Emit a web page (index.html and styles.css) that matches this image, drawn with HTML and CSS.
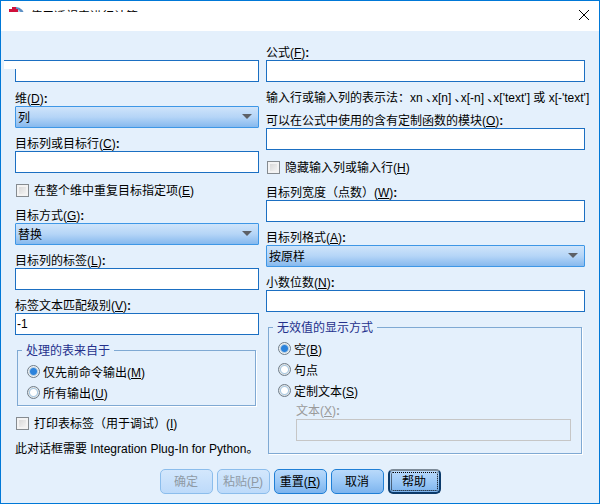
FILE: index.html
```html
<!DOCTYPE html>
<html lang="zh-CN">
<head>
  <meta charset="UTF-8">
  <meta name="viewport" content="width=device-width, initial-scale=1.0">
  <title>使用透视表进行计算</title>
  <link rel="stylesheet" href="styles.css">
</head>
<body>
  <form class="dialog">
    <header class="titlebar">
      <div class="caption">
        <svg class="logo" width="16" height="16" viewBox="0 0 16 16">
          <path d="M7 0a8 8 0 0 1 8 9H7z" fill="#5c8fc4"/>
          <path d="M8 2a6 6 0 0 1 4 6H8z" fill="#b9d3ea"/>
          <path d="M3 0h4v2h2v3H7v4H3V5H0V2h3z" fill="#d0103a"/>
        </svg>
        <span>使用透视表进行计算</span>
      </div>
      <button type="button" class="close" aria-label="关闭">
        <svg width="12" height="12" viewBox="0 0 12 12">
          <path d="M1 1l10 10M11 1L1 11" stroke="#000" stroke-width="1" fill="none"/>
        </svg>
      </button>
    </header>

    <main class="columns">
      <div class="column">
        <div class="field first">
          <input type="text" class="text" aria-label="名称">
        </div>
        <div class="field">
          <label for="dim">维(<u>D</u>)<b>:</b></label>
          <div class="dropdown"><select id="dim"><option>列</option></select></div>
        </div>
        <div class="field">
          <label for="target">目标列或目标行(<u>C</u>)<b>:</b></label>
          <input type="text" class="text" id="target">
        </div>
        <div class="check">
          <input type="checkbox" id="repeat">
          <label for="repeat">在整个维中重复目标指定项(<u>E</u>)</label>
        </div>
        <div class="field">
          <label for="mode">目标方式(<u>G</u>)<b>:</b></label>
          <div class="dropdown"><select id="mode"><option>替换</option></select></div>
        </div>
        <div class="field">
          <label for="collabel">目标列的标签(<u>L</u>)<b>:</b></label>
          <input type="text" class="text" id="collabel">
        </div>
        <div class="field">
          <label for="level">标签文本匹配级别(<u>V</u>)<b>:</b></label>
          <input type="text" class="text" id="level" value="-1">
        </div>
        <fieldset class="group">
          <legend>处理的表来自于</legend>
          <div class="radio">
            <input type="radio" name="source" id="prev" checked>
            <label for="prev">仅先前命令输出(<u>M</u>)</label>
          </div>
          <div class="radio">
            <input type="radio" name="source" id="all">
            <label for="all">所有输出(<u>U</u>)</label>
          </div>
        </fieldset>
        <div class="check">
          <input type="checkbox" id="print">
          <label for="print">打印表标签（用于调试）(<u>I</u>)</label>
        </div>
        <p class="note">此对话框需要 Integration Plug-In for Python。</p>
      </div>

      <div class="column">
        <div class="field">
          <label for="formula">公式(<u>F</u>)<b>:</b></label>
          <input type="text" class="text" id="formula">
        </div>
        <p class="note">输入行或输入列的表示法：<span class="syntax">xn 、x[n] 、x[-n] 、x['text'] 或 x[-'text']</span></p>
        <div class="field">
          <label for="module">可以在公式中使用的含有定制函数的模块(<u>O</u>)<b>:</b></label>
          <input type="text" class="text" id="module">
        </div>
        <div class="check">
          <input type="checkbox" id="hide">
          <label for="hide">隐藏输入列或输入行(<u>H</u>)</label>
        </div>
        <div class="field">
          <label for="width">目标列宽度（点数）(<u>W</u>)<b>:</b></label>
          <input type="text" class="text" id="width">
        </div>
        <div class="field">
          <label for="format">目标列格式(<u>A</u>)<b>:</b></label>
          <div class="dropdown"><select id="format"><option>按原样</option></select></div>
        </div>
        <div class="field">
          <label for="decimals">小数位数(<u>N</u>)<b>:</b></label>
          <input type="text" class="text" id="decimals">
        </div>
        <fieldset class="group grow">
          <legend>无效值的显示方式</legend>
          <div class="radio">
            <input type="radio" name="invalid" id="blank" checked>
            <label for="blank">空(<u>B</u>)</label>
          </div>
          <div class="radio">
            <input type="radio" name="invalid" id="dot">
            <label for="dot">句点</label>
          </div>
          <div class="radio">
            <input type="radio" name="invalid" id="custom">
            <label for="custom">定制文本(<u>S</u>)</label>
          </div>
          <div class="custom-text">
            <label for="customtext">文本(<u>X</u>)<b>:</b></label>
            <input type="text" class="text" id="customtext" disabled>
          </div>
        </fieldset>
      </div>
    </main>

    <footer class="buttons">
      <button type="button" disabled>确定</button>
      <button type="button" disabled>粘贴(<u>P</u>)</button>
      <button type="button">重置(<u>R</u>)</button>
      <button type="button">取消</button>
      <button type="button" class="focused">帮助</button>
    </footer>
  </form>
</body>
</html>
```
FILE: styles.css
```css
* {
  box-sizing: border-box;
}

body {
  margin: 0;
  font-family: "Liberation Sans", "Noto Sans CJK SC", sans-serif;
  font-size: 12px;
  line-height: 16px;
  color: #000;
}

input,
select,
button {
  margin: 0;
  font: inherit;
  color: inherit;
}

.dialog {
  display: flex;
  flex-direction: column;
  min-height: 100vh;
  border: 1px solid #0078d7;
  background: #e4f0fc;
}

.titlebar {
  display: flex;
  justify-content: space-between;
  align-items: flex-start;
  height: 30px;
  padding: 0 8px;
  background: #fff;
}

.caption {
  display: flex;
  align-items: flex-start;
  gap: 5px;
  height: 11px;
  padding-top: 6px;
  overflow: hidden;
}

.caption span {
  padding-top: 2px;
}

.logo {
  flex: none;
}

.close {
  display: flex;
  padding: 8px 1px;
  border: none;
  background: none;
}

.columns {
  display: grid;
  grid-template-columns: 244fr 319fr;
  gap: 7px;
  padding: 13px 14px 0;
}

.column {
  display: flex;
  flex-direction: column;
  gap: 7px;
  min-width: 0;
}

.field {
  display: flex;
  flex-direction: column;
}

.field label,
.note {
  padding-top: 2px;
  line-height: 14px;
}

.first {
  position: relative;
  margin-bottom: 1px;
  padding-top: 16px;
}

/* white notch over the corner of the first box */
.first::before {
  content: "";
  position: absolute;
  left: -11px;
  top: 16px;
  width: 12px;
  height: 8px;
  border-top: 1px solid #1b6fc2;
  background: #fff;
}

.text {
  width: 100%;
  height: 22px;
  padding: 0 1px;
  border: 1px solid #1b6fc2;
  border-radius: 0;
  background: #fff;
}

.text:disabled {
  border-color: #c6c6c6;
  background: transparent;
}

.dropdown {
  position: relative;
}

.dropdown::after {
  content: "";
  position: absolute;
  right: 7px;
  top: 8px;
  border: 5px solid transparent;
  border-top-color: #5c6066;
  border-bottom: none;
  pointer-events: none;
}

.dropdown select {
  display: block;
  appearance: none;
  width: 100%;
  height: 22px;
  padding: 1px 2px 0;
  border: 1px solid #3e97e6;
  border-radius: 1px;
  background: linear-gradient(#cfe4fa, #b5d5f7 50%, #86b9ee);
}

.check,
.radio {
  display: flex;
  align-items: center;
}

.check {
  gap: 5px;
  margin: 2px 0;
  padding-left: 1px;
}

.check input {
  appearance: none;
  width: 13px;
  height: 13px;
  border: 1px solid #858b90;
  background: linear-gradient(135deg, #d2d2d2, #fafafa);
  box-shadow: inset 0 0 0 2px #f3f3f3;
}

.radio {
  gap: 3px;
  height: 21px;
}

.check label,
.radio label {
  padding-top: 2px;
  line-height: 14px;
}

.radio input {
  appearance: none;
  width: 13px;
  height: 13px;
  border: 1px solid #6f7c88;
  border-radius: 50%;
  background: radial-gradient(circle, #fff 3px, #a9c9e2 4px, #e0e4e6 5px);
}

.radio input:checked {
  background: radial-gradient(circle, #2c83dc 3px, #b4cde2 4px, #eef2f4 5px);
}

.group {
  min-width: 0;
  margin: 0 3px 0 2px;
  padding: 3px 9px 2px;
  border: 1px solid #7fa9d3;
  box-shadow: 1px 1px #fff;
}

.group legend {
  padding: 2px 4px 0;
  margin-left: -5px;
  line-height: 14px;
  color: #24308c;
}

.grow {
  padding-bottom: 12px;
}

.custom-text {
  margin: 0 1px 0 18px;
  color: #9a9a9a;
}

.custom-text label {
  display: block;
  padding-top: 2px;
}

.note {
  margin: 0;
  white-space: nowrap;
}

.syntax {
  font-feature-settings: "palt";
}

.buttons {
  display: flex;
  justify-content: center;
  gap: 4px;
  margin-top: auto;
  padding-bottom: 9px;
}

.buttons button {
  width: 53px;
  height: 25px;
  padding: 1px 0 0;
  border: 1px solid #1f7fd6;
  border-radius: 5px;
  background: linear-gradient(#b9d9fa, #9cc9f7 50%, #7db4ee);
  white-space: nowrap;
}

.buttons button:disabled {
  border-color: #8bbdec;
  background: linear-gradient(#d3e7fc, #bddafa);
  color: #8f9aa5;
}

.buttons .focused {
  border: 2px solid #0b3a6a;
  border-top-color: #7d8b98;
  outline: 1px dotted #000;
  outline-offset: -4px;
}
```
